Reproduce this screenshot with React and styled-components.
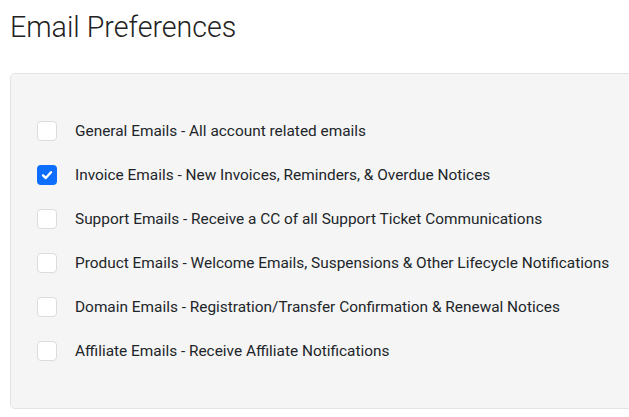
import { useState } from "react";
import styled, { createGlobalStyle } from "styled-components";

const GlobalStyle = createGlobalStyle`
  body {
    margin: 0;
    background: #fff;
    font-family: Roboto, "Liberation Sans", sans-serif;
    overflow: hidden;
  }
`;

const Page = styled.div`
  width: 629px;
  height: 417px;
  padding: 0 0 0 10px;
  box-sizing: border-box;
`;

const Title = styled.h1`
  margin: 0;
  padding-top: 9px;
  font-weight: 300;
  font-size: 28.6px;
  line-height: 36px;
  color: #222;
`;

const Panel = styled.div`
  margin-top: 28px;
  width: 640px;
  height: 336px;
  box-sizing: border-box;
  background: #f5f5f5;
  border: 1px solid #e3e3e3;
  border-radius: 5px;
  padding: 47px 0 0 26px;
  display: flex;
  flex-direction: column;
  gap: 24px;
`;

const Row = styled.label`
  display: flex;
  align-items: center;
  gap: 18px;
  height: 20px;
  font-size: 15.4px;
  color: #212529;
  cursor: pointer;
`;

const Box = styled.span`
  width: 20px;
  height: 20px;
  box-sizing: border-box;
  border-radius: 4px;
  border: ${(p) => (p.$on ? "none" : "1px solid #dcdcdc")};
  background: ${(p) => (p.$on ? "#0d6efd" : "#fff")};
  display: flex;
  align-items: center;
  justify-content: center;
  flex-shrink: 0;
`;

const prefs = [
  "General Emails - All account related emails",
  "Invoice Emails - New Invoices, Reminders, & Overdue Notices",
  "Support Emails - Receive a CC of all Support Ticket Communications",
  "Product Emails - Welcome Emails, Suspensions & Other Lifecycle Notifications",
  "Domain Emails - Registration/Transfer Confirmation & Renewal Notices",
  "Affiliate Emails - Receive Affiliate Notifications",
];

export default function App() {
  const [checked, setChecked] = useState([false, true, false, false, false, false]);
  const toggle = (i) => {
    setChecked((prev) => prev.map((v, j) => (j === i ? !v : v)));
  };
  return (
    <Page>
      <GlobalStyle />
      <Title>Email Preferences</Title>
      <Panel>
        {prefs.map((text, i) => (
          <Row key={text} onClick={() => toggle(i)}>
            <Box $on={checked[i]}>
              {checked[i] && (
                <svg width="14" height="14" viewBox="0 0 14 14">
                  <path
                    d="M3 7.4 L5.8 10 L11 4.2"
                    fill="none"
                    stroke="#fff"
                    strokeWidth="2.4"
                    strokeLinecap="round"
                    strokeLinejoin="round"
                  />
                </svg>
              )}
            </Box>
            {text}
          </Row>
        ))}
      </Panel>
    </Page>
  );
}
